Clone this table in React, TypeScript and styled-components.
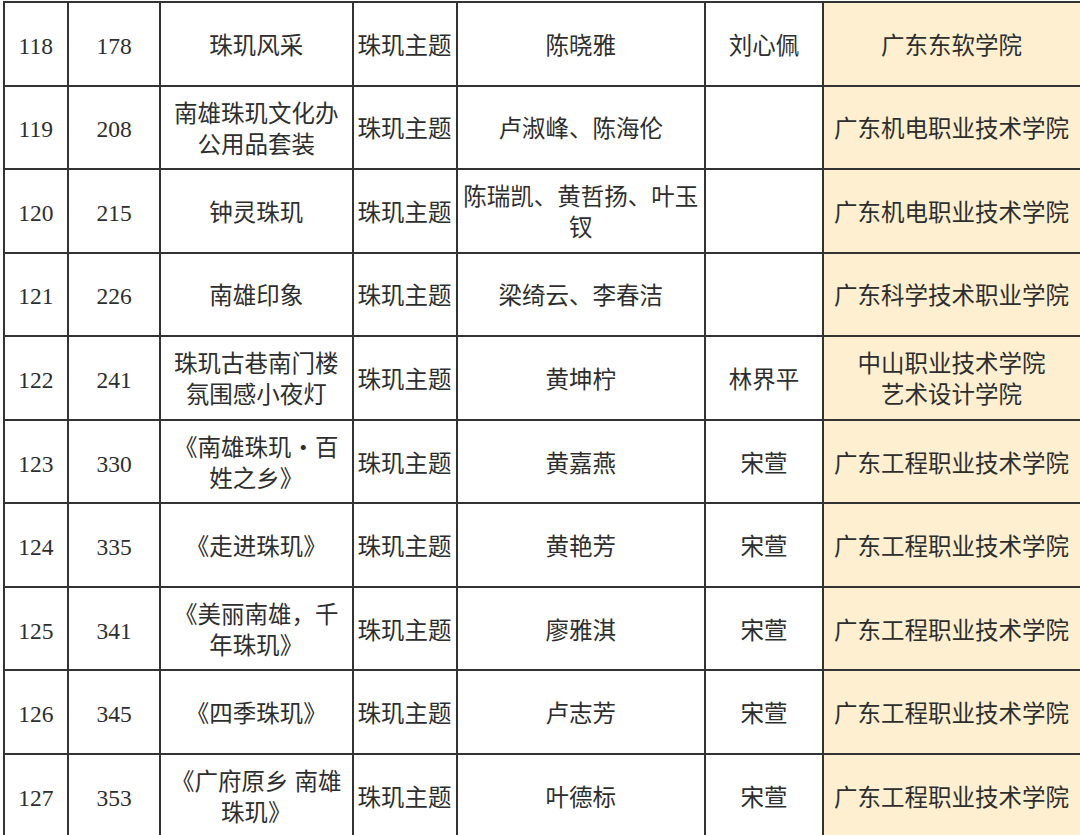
import React from "react";
import styled, { createGlobalStyle } from "styled-components";

const Global = createGlobalStyle`
  html, body { margin: 0; padding: 0; background: #ffffff; overflow: hidden; }
  body { width: 1080px; height: 835px; }
`;

const Page = styled.div`
  width: 1080px;
  height: 835px;
  overflow: hidden;
  padding: 1px 0 0 2.5px;
  box-sizing: border-box;
`;

const Table = styled.table`
  border-collapse: collapse;
  table-layout: fixed;
  width: 1083px;
  font-family: "Liberation Serif", "Noto Sans CJK SC", serif;
  font-size: 23.5px;
  color: #2e2e2e;
`;

const Row = styled.tr`
  height: 83.55px;
`;

const Cell = styled.td<{ $tint?: boolean }>`
  border: 2px solid #333333;
  padding: ${(p) => (p.$tint ? "5px 8px 0 2px" : "5px 2px 0")};
  text-align: center;
  vertical-align: middle;
  line-height: 31px;
  background: ${(p) => (p.$tint ? "#fdefcf" : "#ffffff")};
  white-space: nowrap;
  overflow: hidden;
`;

const widths = [64.5, 92, 192.5, 104, 248.5, 118, 263];

type Item = {
  no: string;
  id: string;
  title: string[];
  cat: string;
  authors: string[];
  teacher: string;
  school: string[];
};

const rows: Item[] = [
  { no: "118", id: "178", title: ["珠玑风采"], cat: "珠玑主题", authors: ["陈晓雅"], teacher: "刘心佩", school: ["广东东软学院"] },
  { no: "119", id: "208", title: ["南雄珠玑文化办", "公用品套装"], cat: "珠玑主题", authors: ["卢淑峰、陈海伦"], teacher: "", school: ["广东机电职业技术学院"] },
  { no: "120", id: "215", title: ["钟灵珠玑"], cat: "珠玑主题", authors: ["陈瑞凯、黄哲扬、叶玉", "钗"], teacher: "", school: ["广东机电职业技术学院"] },
  { no: "121", id: "226", title: ["南雄印象"], cat: "珠玑主题", authors: ["梁绮云、李春洁"], teacher: "", school: ["广东科学技术职业学院"] },
  { no: "122", id: "241", title: ["珠玑古巷南门楼", "氛围感小夜灯"], cat: "珠玑主题", authors: ["黄坤柠"], teacher: "林界平", school: ["中山职业技术学院", "艺术设计学院"] },
  { no: "123", id: "330", title: ["《南雄珠玑・百", "姓之乡》"], cat: "珠玑主题", authors: ["黄嘉燕"], teacher: "宋萱", school: ["广东工程职业技术学院"] },
  { no: "124", id: "335", title: ["《走进珠玑》"], cat: "珠玑主题", authors: ["黄艳芳"], teacher: "宋萱", school: ["广东工程职业技术学院"] },
  { no: "125", id: "341", title: ["《美丽南雄，千", "年珠玑》"], cat: "珠玑主题", authors: ["廖雅淇"], teacher: "宋萱", school: ["广东工程职业技术学院"] },
  { no: "126", id: "345", title: ["《四季珠玑》"], cat: "珠玑主题", authors: ["卢志芳"], teacher: "宋萱", school: ["广东工程职业技术学院"] },
  { no: "127", id: "353", title: ["《广府原乡 南雄", "珠玑》"], cat: "珠玑主题", authors: ["叶德标"], teacher: "宋萱", school: ["广东工程职业技术学院"] },
];

const Lines = ({ parts }: { parts: string[] }) => (
  <>
    {parts.map((p, i) => (
      <React.Fragment key={i}>
        {i > 0 && <br />}
        {p}
      </React.Fragment>
    ))}
  </>
);

export default function App() {
  return (
    <Page>
      <Global />
      <Table>
        <colgroup>
          {widths.map((w, i) => (
            <col key={i} style={{ width: w }} />
          ))}
        </colgroup>
        <tbody>
          {rows.map((r) => (
            <Row key={r.no}>
              <Cell>{r.no}</Cell>
              <Cell>{r.id}</Cell>
              <Cell>
                <Lines parts={r.title} />
              </Cell>
              <Cell>{r.cat}</Cell>
              <Cell>
                <Lines parts={r.authors} />
              </Cell>
              <Cell>{r.teacher}</Cell>
              <Cell $tint>
                <Lines parts={r.school} />
              </Cell>
            </Row>
          ))}
        </tbody>
      </Table>
    </Page>
  );
}
